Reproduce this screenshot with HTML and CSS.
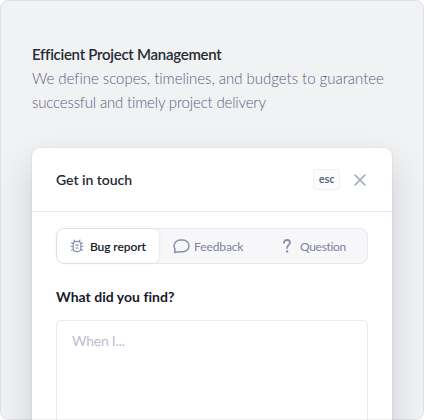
FILE: index.html
```html
<!doctype html>
<html lang="en">
<head>
<title>Efficient Project Management</title>
<meta charset="UTF-8">
<meta name="viewport" content="width=device-width, initial-scale=1.0">
<link rel="stylesheet" href="styles.css">
</head>
<body>
<div class="card">
<div class="intro">
<h2>Efficient Project Management</h2>
<p>We define scopes, timelines, and budgets to guarantee<br><span class="tight">successful and timely project delivery</span></p>
</div>
<div class="panel">
<div class="panel-top">
<h3>Get in touch</h3>
<span class="key">esc</span>
<svg class="close" viewBox="0 0 12 12"><path d="M1 1l10 10M11 1L1 11"/></svg>
</div>
<div class="panel-body">
<div class="tabs">
<div class="tab active">
<svg class="bug" viewBox="0 0 14 14"><path d="M3.2 5.2Q3.2 2.4 7 2.4t3.8 2.8v4.2Q10.8 12.6 7 12.6T3.2 9.4zM5 2.4L4 1.1M9 2.4l1-1.3M3.2 5L1.6 3.8M10.8 5l1.6-1.2M3.2 7.5H1M10.8 7.5H13M3.2 10.2l-1.6 1M10.8 10.2l1.6 1M5.8 6.2h2.4M5.8 9h2.4"/></svg>
<span>Bug report</span>
</div>
<div class="tab feedback">
<svg class="bubble" viewBox="0 0 17 15"><path d="M1.5 13.5l.6-3.3C1.4 9.2 1 8.2 1 7c0-3.4 2.8-5.9 6.3-5.9h2.4c3.5 0 6.3 2.5 6.3 5.8s-2.8 5.8-6.3 5.8H6.5z"/></svg>
<span>Feedback</span>
</div>
<div class="tab question">
<svg class="mark" viewBox="0 0 8 14"><path d="M1 3.8C1.1 2 2.3 1 4 1s3 1 3 2.6C7 6 4.1 6 4.1 9"/><circle cx="4.1" cy="12.4" r="1.2"/></svg>
<span>Question</span>
</div>
</div>
<label for="found">What did you find?</label>
<div class="field" id="found">When I...</div>
</div>
</div>
</div>
</body>
</html>
```
FILE: styles.css
```css
* {box-sizing: border-box;}
body {margin: 0; background: #fff; font-family: Lato, "Liberation Sans", sans-serif; font-variant-ligatures: none; overflow: hidden;}
h2, h3, p {margin: 0;}
svg {fill: none; stroke: #8a90ad; stroke-linecap: round; stroke-linejoin: round; flex: none;}
.card {position: relative; width: 424px; height: 420px; padding: 42px 32px 0; background: #f1f2f4; border-radius: 8px; overflow: hidden;}
.card::after {content: ""; position: absolute; inset: 0; border: 1px solid rgba(20, 25, 35, .08); border-radius: 8px;}
.intro {height: 106px; font-size: 15px; line-height: 24px; white-space: nowrap;}
h2 {font-size: 15px; font-weight: 600; line-height: 24px; letter-spacing: -.28px; color: #242b33;}
.intro p {font-weight: 300; letter-spacing: -.02px; color: #5d6080;}
.tight {letter-spacing: -.17px;}
.panel {height: 330px; background: #fff; border-radius: 8px; box-shadow: 0 0 2px rgba(20, 25, 35, .12), 0 16px 36px rgba(20, 25, 35, .16);}
.panel-top {display: flex; align-items: center; height: 64px; padding: 0 26px 0 24px; border-bottom: 1px solid #e9eaed;}
h3 {flex: 1; font-size: 14px; font-weight: 600; letter-spacing: -.03px; color: #242b33;}
.key {width: 27px; height: 21px; border: 1px solid #eff0f2; border-radius: 3px; background: #fcfcfd; font: 600 10px/19px "Noto Sans", sans-serif; letter-spacing: -.1px; text-align: center; color: #596b7c;}
.close {width: 12px; height: 12px; margin-left: 14px; stroke: #9ba9b6; stroke-width: 1.6;}
.panel-body {padding: 16px 24px 0;}
.tabs {display: flex; height: 36px; border: 1px solid #e8e9ef; border-radius: 8px; background: #f7f7fa;}
.tab {display: flex; align-items: center; font-size: 12px; color: #7c80a0; white-space: nowrap;}
.active {width: 102px; padding-left: 13px; gap: 6px; border-radius: 7px; background: #fff; box-shadow: 0 0 3px rgba(30, 35, 60, .12); color: #171a2b; font-weight: 600; letter-spacing: -.1px;}
.feedback {width: 108px; padding-left: 14px; gap: 4px; letter-spacing: -.1px;}
.question {padding-left: 16px; gap: 9px; letter-spacing: -.3px;}
.bug {width: 14px; height: 14px; stroke-width: 1.2;}
.bubble {width: 17px; height: 15px; stroke-width: 1.5;}
.mark {width: 8px; height: 14px; stroke-width: 1.8;}
.mark circle {fill: #8a90ad; stroke: none;}
label {display: block; margin-top: 21px; font-size: 14px; font-weight: 700; line-height: 24px; letter-spacing: .02px; color: #171a2b;}
.field {height: 120px; margin-top: 11px; padding: 8px 15px; border: 1px solid #ebebef; border-radius: 5px; font-size: 14px; line-height: 24px; letter-spacing: -.25px; color: #bcbdd2;}
```
